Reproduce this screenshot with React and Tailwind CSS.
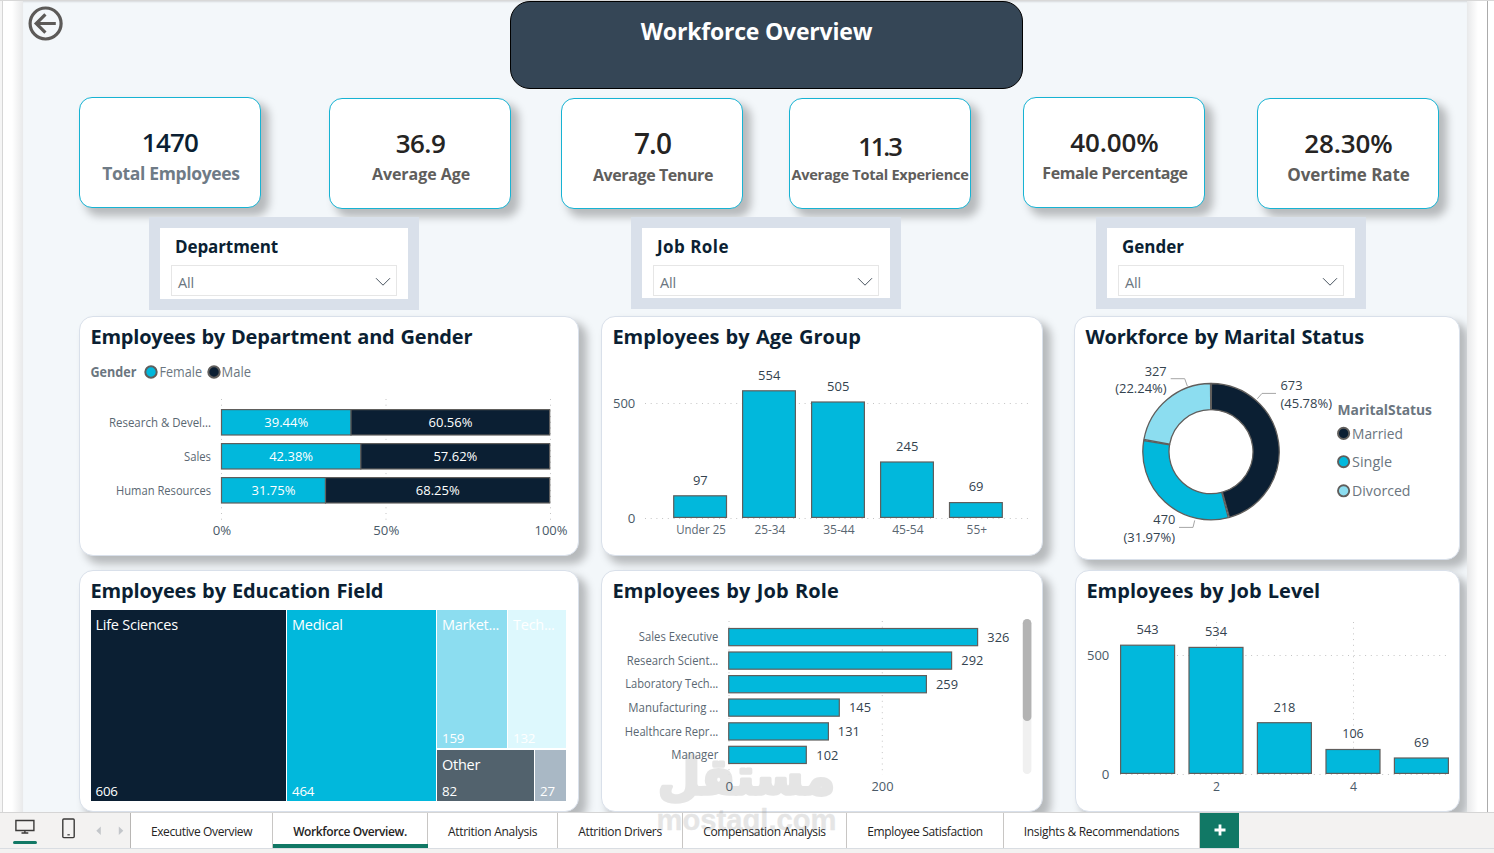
import React from "react";

const CYAN = "#01B8DC";
const NAVY = "#0B1F33";
const EDGE = "#605E5C";

/* Chart text: `w` fixes the run length so labels keep the report's metrics. */
function T({ x, y, w, s = 13, a = "middle", c = "#4A5A68", b, children }) {
  return (
    <text
      x={x}
      y={y}
      fontSize={s}
      textAnchor={a}
      fill={c}
      fontWeight={b || 400}
      textLength={w}
      lengthAdjust="spacingAndGlyphs"
    >
      {children}
    </text>
  );
}

function Dots({ x1, y1, x2, y2 }) {
  return <line x1={x1} y1={y1} x2={x2} y2={y2} stroke="#C4C4C4" strokeWidth="1" strokeDasharray="1 4.7" />;
}

function Bar({ x, y, x2, y2, fill = CYAN }) {
  return <rect x={x} y={y} width={x2 - x} height={y2 - y} fill={fill} stroke={EDGE} strokeWidth="1.2" />;
}

function Kpi({ value, label, className, valueClass, labelClass }) {
  return (
    <div
      className={
        "h-[111px] w-[182px] shrink-0 overflow-hidden whitespace-nowrap rounded-[13px] border border-[#17B3D3] bg-white text-center shadow-[7px_7px_9px_1px_rgba(0,0,0,0.25)] " +
        className
      }
    >
      <div className={"font-semibold leading-[34px] " + valueClass}>{value}</div>
      <div className={"flex justify-center font-bold leading-6 " + labelClass}>
        <span>{label}</span>
      </div>
    </div>
  );
}

function Slicer({ title, className, titleClass }) {
  return (
    <div className={"w-[270px] shrink-0 border-[11px] border-[#D9E0EA] bg-white px-[11px] pt-[7px] " + className}>
      <div className={"pl-1 text-[17px] font-bold leading-6 text-[#0B1F33] " + titleClass}>{title}</div>
      <div className="mt-[6px] flex h-[31px] w-[226px] items-center justify-between border border-[#E6E6E6] pl-[6px] pr-[5px] pt-[4px] text-[14.5px] text-[#6B7680]">
        <span className="tracking-[-0.2px]">All</span>
        <svg width="16" height="10" viewBox="0 0 16 10" className="-mt-[2px]">
          <path d="M1 1.2 L8 8.2 L15 1.2" fill="none" stroke="#4A5560" strokeWidth="1" />
        </svg>
      </div>
    </div>
  );
}

function Card({ title, className, titleClass, children }) {
  return (
    <section
      className={
        "shrink-0 overflow-hidden rounded-[14px] border border-[#D9E0EA] bg-white shadow-[7px_7px_9px_1px_rgba(0,0,0,0.25)] " +
        className
      }
    >
      <h2 className={"h-[36px] whitespace-nowrap pl-[10.4px] pt-[5px] text-[20px] font-bold leading-[30px] text-[#0B1F33] [word-spacing:1px] " + titleClass}>
        {title}
      </h2>
      {children}
    </section>
  );
}

function DepartmentGender() {
  const rows = [
    { n: "Research & Devel...", nw: 102, y: 409.6, m: 351, f: "39.44%", g: "60.56%" },
    { n: "Sales", nw: 27, y: 443.6, m: 360.8, f: "42.38%", g: "57.62%" },
    { n: "Human Resources", nw: 95, y: 477.6, m: 325.5, f: "31.75%", g: "68.25%" },
  ];
  return (
    <svg width="498" height="200" viewBox="80 353 498 200" className="block">
      <T x="90.5" y="377" w="46" s="13.5" a="start" b="700" c="#6B7680">Gender</T>
      <circle cx="151" cy="372" r="5.7" fill={CYAN} stroke={EDGE} strokeWidth="2" />
      <T x="159.5" y="377" w="42.5" s="14" a="start" c="#6B7680">Female</T>
      <circle cx="214" cy="372" r="5.7" fill={NAVY} stroke={EDGE} strokeWidth="2" />
      <T x="221.5" y="377" w="29.5" s="14" a="start" c="#6B7680">Male</T>
      {[221.5, 386, 550.5].map((x) => (
        <Dots key={x} x1={x} x2={x} y1={399} y2={520} />
      ))}
      {rows.map((r) => (
        <g key={r.n}>
          <Bar x={221.5} x2={r.m} y={r.y} y2={r.y + 25.4} />
          <Bar x={r.m} x2={549.7} y={r.y} y2={r.y + 25.4} fill={NAVY} />
          <T x="211" y={r.y + 17.4} w={r.nw} s="11.8" a="end" c="#5A6772">{r.n}</T>
          <T x={(221.5 + r.m) / 2} y={r.y + 17.2} w="44" s="13.3" b="500" c="#FFFFFF">{r.f}</T>
          <T x={(r.m + 550) / 2} y={r.y + 17.2} w="44" s="13.3" b="500" c="#FFFFFF">{r.g}</T>
        </g>
      ))}
      <T x="222" y="535" w="18.5">0%</T>
      <T x="386.3" y="535" w="26">50%</T>
      <T x="551" y="535" w="33">100%</T>
    </svg>
  );
}

function AgeGroup() {
  const bars = [
    ["Under 25", 49.5, 673.7, 495.8, "97", 14.8, 484.7],
    ["25-34", 31, 742.6, 390.8, "554", 22.2, 379.7],
    ["35-44", 31.5, 811.6, 402, "505", 22.2, 390.7],
    ["45-54", 31.5, 880.6, 462, "245", 22.2, 450.8],
    ["55+", 20.5, 949.5, 502.6, "69", 14.8, 491],
  ];
  return (
    <svg width="440" height="200" viewBox="602 353 440 200" className="block">
      <Dots x1={645} x2={1031} y1={403.5} y2={403.5} />
      <Dots x1={645} x2={1031} y1={518.5} y2={518.5} />
      <T x="635.3" y="408" w="22.3" a="end">500</T>
      <T x="635.3" y="523" w="7.6" a="end">0</T>
      {bars.map(([n, nw, x, y, v, vw, vy]) => (
        <g key={n}>
          <Bar x={x} x2={x + 52.8} y={y} y2={517.4} />
          <T x={x + 26.6} y={vy} w={vw} s="13.3" c="#34434F">{v}</T>
          <T x={x + 27.3} y="534" w={nw} s="11.8" c="#5A6772">{n}</T>
        </g>
      ))}
    </svg>
  );
}

const CX = 1211;
const CY = 451.7;
function arc(a0, a1, R = 68.2, r = 42) {
  const p = (a, q) => {
    const t = ((a - 90) * Math.PI) / 180;
    return (CX + q * Math.cos(t)).toFixed(2) + " " + (CY + q * Math.sin(t)).toFixed(2);
  };
  return `M${p(a0, R)} A${R} ${R} 0 0 1 ${p(a1, R)} L${p(a1, r)} A${r} ${r} 0 0 0 ${p(a0, r)} Z`;
}

function MaritalStatus() {
  const legend = [
    ["Married", 51, 433.4, NAVY],
    ["Single", 40, 461.7, CYAN],
    ["Divorced", 58.5, 490.8, "#8CDDF0"],
  ];
  return (
    <svg width="384" height="204" viewBox="1075 353 384 204" className="block">
      <g stroke={EDGE} strokeWidth="1.3">
        <path d={arc(0.4, 164.3)} fill={NAVY} />
        <path d={arc(165.3, 279.4)} fill={CYAN} />
        <path d={arc(280.4, 359.6)} fill="#8CDDF0" />
      </g>
      <g fill="none" stroke="#A6A6A6">
        <path d="M1170.7 378.7 H1184.7 L1187.3 386" />
        <path d="M1276 393.4 H1262 L1257.3 398.8" />
        <path d="M1179 527.4 H1193 L1194.7 520.4" />
      </g>
      <T x="1166.7" y="375.5" w="22" a="end" c="#34434F">327</T>
      <T x="1166.7" y="393.4" w="51.5" a="end" c="#34434F">(22.24%)</T>
      <T x="1280.5" y="389.8" w="22" a="start" c="#34434F">673</T>
      <T x="1280.5" y="407.5" w="51.5" a="start" c="#34434F">(45.78%)</T>
      <T x="1175.3" y="523.8" w="22" a="end" c="#34434F">470</T>
      <T x="1175" y="541.5" w="51.5" a="end" c="#34434F">(31.97%)</T>
      <T x="1337.5" y="415" w="94.5" s="14.5" a="start" b="700" c="#6B7680">MaritalStatus</T>
      {legend.map(([n, w, y, f]) => (
        <g key={n}>
          <circle cx="1343.6" cy={y} r="5.6" fill={f} stroke={EDGE} strokeWidth="1.9" />
          <T x="1352" y={y + 5.4} w={w} s="14.6" a="start" c="#6B7680">{n}</T>
        </g>
      ))}
    </svg>
  );
}

function Tile({ className, name, value }) {
  return (
    <div className={"flex flex-col justify-between overflow-hidden whitespace-nowrap pb-px pl-[5px] text-white " + className}>
      <span className="pt-[5px] text-[14.5px] leading-5 tracking-[-0.25px]">{name}</span>
      <span className="text-[13.3px] leading-[18px] tracking-[-0.2px]">{value}</span>
    </div>
  );
}

function EducationField() {
  return (
    <div className="ml-[10.5px] mt-[3px] flex h-[191px] w-[475.5px] gap-[1.5px]">
      <Tile className="w-[195px] bg-[#0B1F33]" name="Life Sciences" value="606" />
      <Tile className="w-[148.5px] bg-[#01B8DC]" name="Medical" value="464" />
      <div className="flex w-[129px] flex-col gap-[2px]">
        <div className="flex h-[138px] gap-[1.5px]">
          <Tile className="w-[69.5px] bg-[#8CDDF0]" name="Market..." value="159" />
          <Tile className="w-[58px] bg-[#DDF8FD]" name="Tech..." value="132" />
        </div>
        <div className="flex h-[51px] gap-[1.5px]">
          <Tile className="w-[96.5px] bg-[#52626D]" name="Other" value="82" />
          <Tile className="w-[31px] bg-[#A9B8C5]" name="" value="27" />
        </div>
      </div>
    </div>
  );
}

function JobRole() {
  const rows = [
    ["Sales Executive", 79.5, 628.5, 977.6, "326", 1009],
    ["Research Scient...", 91.5, 652, 951.6, "292", 983],
    ["Laboratory Tech...", 93, 675.6, 926.4, "259", 957.7],
    ["Manufacturing ...", 90, 699, 839.3, "145", 870.7],
    ["Healthcare Repr...", 93.5, 722.8, 828.4, "131", 859.5],
    ["Manager", 47, 746.3, 806.3, "102", 838],
  ];
  return (
    <svg width="440" height="204" viewBox="602 607 440 204" className="block">
      <Dots x1={729} x2={729} y1={621} y2={775} />
      <Dots x1={882.3} x2={882.3} y1={621} y2={775} />
      {rows.map(([n, nw, y, x2, v, vx]) => (
        <g key={n}>
          <Bar x={728.7} x2={x2} y={y} y2={y + 17.2} />
          <T x="718.3" y={y + 12.8} w={nw} s="11.8" a="end" c="#5A6772">{n}</T>
          <T x={vx + 0.3} y={y + 13.2} w="22" s="13.3" a="end" c="#34434F">{v}</T>
        </g>
      ))}
      <T x="729.3" y="791" w="7.6">0</T>
      <T x="882.5" y="791" w="22">200</T>
      <rect x="1022.8" y="619" width="8.6" height="155" rx="4.3" fill="#F0F0F0" />
      <rect x="1022.8" y="619" width="8.6" height="102" rx="4.3" fill="#B3B3B3" />
    </svg>
  );
}

function JobLevel() {
  const bars = [
    [1120.6, 645.2, "543", 22, 634],
    [1189, 647.4, "534", 22, 636],
    [1257.4, 722.7, "218", 22, 712],
    [1326, 749.5, "106", 21.5, 738],
    [1394.4, 758, "69", 14.8, 747],
  ];
  return (
    <svg width="383" height="204" viewBox="1076 607 383 204" className="block">
      <Dots x1={1120} x2={1449} y1={655.5} y2={655.5} />
      <Dots x1={1120} x2={1449} y1={774.5} y2={774.5} />
      <Dots x1={1216.5} x2={1216.5} y1={622} y2={775} />
      <Dots x1={1353.5} x2={1353.5} y1={622} y2={775} />
      <T x="1109.3" y="660" w="22.3" a="end">500</T>
      <T x="1109.3" y="779" w="7.6" a="end">0</T>
      {bars.map(([x, y, v, w, vy]) => (
        <g key={v}>
          <Bar x={x} x2={x + 54} y={y} y2={773.4} />
          <T x={x + 27} y={vy} w={w} s="13.3" c="#34434F">{v}</T>
        </g>
      ))}
      <T x="1216.6" y="791" w="7" s="12">2</T>
      <T x="1353.5" y="791" w="7" s="12">4</T>
    </svg>
  );
}

function Tab({ className, children }) {
  return (
    <div className={"flex h-full shrink-0 items-center justify-center whitespace-nowrap border-r border-[#C8C6C4] bg-white pt-[2px] text-[12px] text-[#252423] " + className}>
      {children}
    </div>
  );
}

export default function App() {
  return (
    <div className="relative flex h-[853px] w-[1494px] flex-col overflow-hidden bg-white font-['Open_Sans','Noto_Sans',sans-serif]">
      <div className="flex h-[812px] shrink-0 border-t border-[#D8D8D8]">
        <div className="w-[3px] shrink-0 border-r border-[#D6D6D6] bg-[#F5F5F5]" />
        <div className="w-[20px] shrink-0 bg-linear-to-r from-white from-45% to-[#E8E9EA]" />
        <main className="h-[811px] w-[1444px] shrink-0 overflow-hidden bg-[#F3F7FA] shadow-[inset_0_2px_2px_-1px_rgba(0,0,0,0.12)]">
          <header className="flex h-[96px] items-start">
            <svg width="36" height="36" viewBox="0 0 36 36" className="ml-[5px] mt-[4px] shrink-0" fill="none" stroke="#5C5A58">
              <circle cx="17.6" cy="18.5" r="15.5" strokeWidth="3.2" />
              <path d="M27.8 18.5 H9 M17.4 9.3 L8.2 18.5 L17.4 27.7" strokeWidth="3.2" />
            </svg>
            <h1 className="ml-[446px] flex h-[88px] w-[513px] items-start justify-center rounded-[20px] border border-black bg-[#354656] pr-[20px] pt-[11px] text-[23px] font-bold leading-9 tracking-[-0.2px] text-white">
              Workforce Overview
            </h1>
          </header>

          <div className="flex h-[120px] items-start pl-[56px]">
            <Kpi value="1470" label="Total Employees" className="pt-[27px]" valueClass="text-[26px] tracking-[-0.8px] text-[#0B1F33]" labelClass="mt-[2px] text-[17.5px] pl-[2px] text-[#6F7B86] tracking-[-0.35px]" />
            <Kpi value="36.9" label="Average Age" className="ml-[68px] mt-px pt-[27px]" valueClass="text-[26px] pl-px tracking-[-0.5px] text-[#252423]" labelClass="mt-[2px] text-[16px] pl-[2px] text-[#605E5C] tracking-[-0.05px]" />
            <Kpi value="7.0" label="Average Tenure" className="ml-[50px] mt-px pt-[27px]" valueClass="text-[28px] pl-px tracking-[-0.9px] text-[#252423]" labelClass="mt-[2px] text-[16px] pl-[2px] pt-px text-[#605E5C] tracking-[-0.4px]" />
            <Kpi value="11.3" label="Average Total Experience" className="ml-[46px] mt-px pt-[30px]" valueClass="text-[25.5px] pr-px tracking-[-2px] text-[#252423]" labelClass="-mt-px text-[14.6px] text-[#605E5C] tracking-[-0.28px]" />
            <Kpi value="40.00%" label="Female Percentage" className="ml-[52px] pt-[27px]" valueClass="text-[26px] pl-px tracking-[-0.1px] text-[#252423]" labelClass="mt-[2px] text-[16px] pl-[2px] text-[#605E5C] tracking-[-0.4px]" />
            <Kpi value="28.30%" label="Overtime Rate" className="ml-[52px] mt-px pt-[27px]" valueClass="text-[26px] pl-px tracking-[-0.1px] text-[#252423]" labelClass="mt-[2px] pt-px text-[17px] pl-px text-[#605E5C] tracking-[-0.1px]" />
          </div>

          <div className="flex h-[99px] items-start pl-[126px]">
            <Slicer title="Department" className="h-[93px]" titleClass="tracking-[-0.1px]" />
            <Slicer title="Job Role" className="ml-[212px] h-[92px]" titleClass="tracking-[0.45px]" />
            <Slicer title="Gender" className="ml-[195px] h-[92px]" titleClass="tracking-0" />
          </div>

          <div className="flex h-[254px] items-start pl-[56px]">
            <Card title="Employees by Department and Gender" className="h-[240px] w-[500px]" titleClass="tracking-[-0.21px]">
              <DepartmentGender />
            </Card>
            <Card title="Employees by Age Group" className="ml-[22px] h-[240px] w-[442px]" titleClass="tracking-[0.01px]">
              <AgeGroup />
            </Card>
            <Card title="Workforce by Marital Status" className="ml-[31px] h-[244px] w-[386px]" titleClass="tracking-[-0.19px]">
              <MaritalStatus />
            </Card>
          </div>

          <div className="flex h-[242px] items-start pl-[56px]">
            <Card title="Employees by Education Field" className="h-[242px] w-[500px]" titleClass="tracking-[-0.14px]">
              <EducationField />
            </Card>
            <Card title="Employees by Job Role" className="ml-[22px] h-[242px] w-[442px]" titleClass="tracking-[0.08px]">
              <JobRole />
            </Card>
            <Card title="Employees by Job Level" className="ml-[32px] h-[242px] w-[385px]" titleClass="tracking-[0.01px]">
              <JobLevel />
            </Card>
          </div>
        </main>
        <div className="w-[20px] shrink-0 bg-linear-to-l from-white from-45% to-[#E8E9EA]" />
        <div className="w-px shrink-0 bg-[#ABABAB]" />
      </div>

      <nav className="flex h-[36px] shrink-0 border-t border-[#D5D5D5] bg-[#F3F2F1]">
        <div className="flex w-[131px] shrink-0 items-start border-r border-[#B8B6B4]">
          <div className="ml-[13px] mt-[6px] flex w-[24px] flex-col items-center">
            <svg width="20" height="15" viewBox="0 0 20 15" fill="none" stroke="#3B3A39">
              <path d="M0.9 1.5 H18.9 V11.5 H0.9 Z M9.9 11.5 V14 M6.5 14 H13.3" strokeWidth="1.4" />
            </svg>
            <div className="mt-[7px] h-[3px] w-[24px] rounded-full bg-[#117865]" />
          </div>
          <svg width="13" height="21" viewBox="0 0 13 21" className="ml-[25px] mt-[5px]" fill="none" stroke="#3B3A39">
            <rect x="0.8" y="1" width="11.4" height="18.6" rx="1" strokeWidth="1.4" />
            <path d="M5.4 16.8 H7.8" strokeWidth="1.2" />
          </svg>
          <svg width="28" height="10" viewBox="0 0 28 10" className="ml-[21px] mt-[13px]" fill="#C3C6CA">
            <path d="M4.8 0.5 V9 L0.3 4.8 Z M22.8 0.5 V9 L27.3 4.8 Z" />
          </svg>
        </div>
        <Tab className="w-[142px] tracking-[-0.38px]">Executive Overview</Tab>
        <Tab className="relative w-[155px] font-semibold tracking-[-0.4px]">
          Workforce Overview.
          <span className="absolute -right-px bottom-0 left-0 h-[4px] bg-[#117865]" />
        </Tab>
        <Tab className="w-[130px] tracking-[-0.28px]">Attrition Analysis</Tab>
        <Tab className="w-[125px] tracking-[-0.32px]">Attrition Drivers</Tab>
        <Tab className="w-[164px] tracking-[-0.35px]">Compensation Analysis</Tab>
        <Tab className="w-[157px] tracking-[-0.33px]">Employee Satisfaction</Tab>
        <Tab className="w-[196px] tracking-[-0.3px]">Insights &amp; Recommendations</Tab>
        <div className="flex w-[39px] shrink-0 items-center justify-center bg-[#117865] pb-[2px]">
          <svg width="12" height="12" viewBox="0 0 12 12">
            <path d="M6 0.5 V11.5 M0.5 6 H11.5" stroke="#FFFFFF" strokeWidth="2.8" />
          </svg>
        </div>
      </nav>
      <div className="h-[5px] shrink-0 border-t border-[#D9DDE2] bg-[#F3F2F1]" />

      <svg width="200" height="100" viewBox="647 745 200 100" className="pointer-events-none absolute left-[647px] top-[745px] opacity-20" fill="#808080" stroke="#808080" strokeLinejoin="round">
        <text x="746.5" y="794" fontSize="50" fontWeight="700" strokeWidth="3.5" textAnchor="middle" textLength="177" lengthAdjust="spacingAndGlyphs" className="font-['DejaVu_Sans',sans-serif]">
          مستقل
        </text>
        <text x="656.5" y="829.5" fontSize="29" fontWeight="700" strokeWidth="0.4" textLength="180" lengthAdjust="spacingAndGlyphs" className="font-['Liberation_Sans',sans-serif]">
          mostaql.com
        </text>
      </svg>
    </div>
  );
}
